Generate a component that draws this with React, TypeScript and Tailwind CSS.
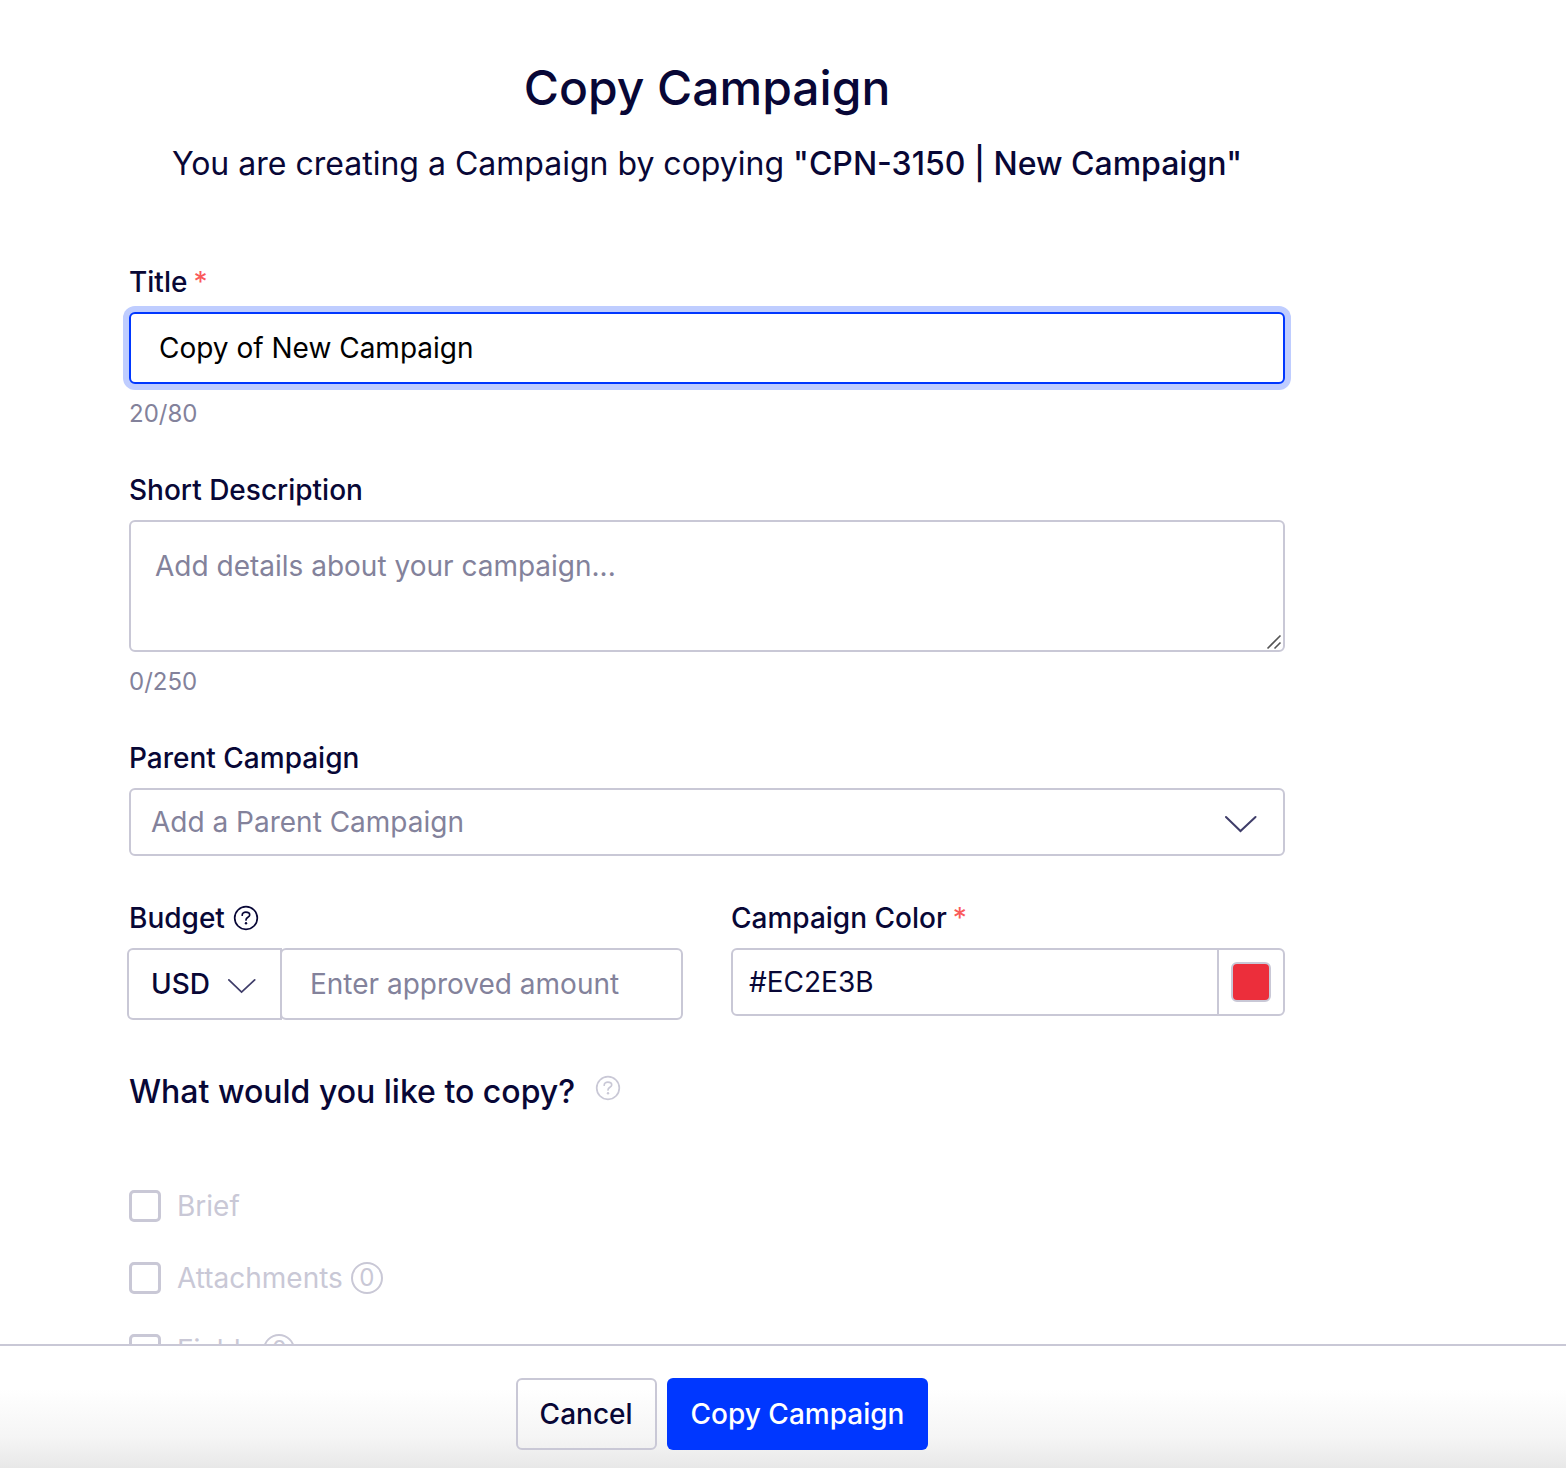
import { useState } from 'react';
import type { ReactNode } from 'react';

function Chevron({ className }: { className: string }) {
  return (
    <svg viewBox="0 0 32 18" fill="none" stroke="currentColor" strokeWidth="2" className={className} aria-hidden="true">
      <path d="M1 2 15.5 16 30.5 2" strokeLinecap="round" strokeLinejoin="miter" />
    </svg>
  );
}

function HelpIcon({ className }: { className: string }) {
  return (
    <svg viewBox="0 0 26 26" fill="none" stroke="currentColor" className={className} aria-hidden="true">
      <circle cx="13" cy="13" r="11.3" strokeWidth="1.7" />
      <path d="M9.2 10.2c0-2 1.6-3 3.7-3s3.8 1.1 3.8 2.8c0 2.4-3.7 2.2-3.7 4.9" strokeWidth="1.7" strokeLinecap="round" />
      <circle cx="13" cy="18.2" r="1.2" fill="currentColor" stroke="none" />
    </svg>
  );
}

function Label({ htmlFor, required, children }: { htmlFor: string; required?: boolean; children: ReactNode }) {
  return (
    <label htmlFor={htmlFor} className="block text-[28px] leading-10 font-medium">
      {children}
      {required && <span className="ml-1.5 font-normal text-[#fa5a5a]">*</span>}
    </label>
  );
}

function CopyOption({ id, label, count }: { id: string; label: string; count?: number }) {
  return (
    <li className="flex items-center gap-4">
      <input
        id={id}
        type="checkbox"
        disabled
        className="size-8 shrink-0 appearance-none rounded-[5px] border-3 border-[#c9c8d6] bg-white"
      />
      <label htmlFor={id} className="flex items-center gap-2 text-[28px] leading-10">
        {label}
        {count !== undefined && (
          <span className="flex size-8 items-center justify-center rounded-full border-2 border-[#c9c8d6] text-2xl leading-none">
            {count}
          </span>
        )}
      </label>
    </li>
  );
}

export default function App() {
  const [title, setTitle] = useState('Copy of New Campaign');
  const [description, setDescription] = useState('');
  const [color, setColor] = useState('#EC2E3B');

  return (
    <form
      className="flex h-screen flex-col bg-white font-['Inter',sans-serif] text-[#080736] [font-optical-sizing:none]"
      onSubmit={(event) => event.preventDefault()}
    >
      <main className="min-h-0 flex-1 overflow-y-auto pt-[58px] pr-[281px] pl-[129px] [scrollbar-width:none]">
        <header className="text-center">
          <h1 className="text-5xl leading-[60px] font-medium">Copy Campaign</h1>
          <p className="mt-6 text-[32px] leading-[44px] whitespace-nowrap">
            You are creating a Campaign by copying <strong className="font-medium">"CPN-3150 | New Campaign"</strong>
          </p>
        </header>

        <div className="mt-[76px]">
          <Label htmlFor="title" required>Title</Label>
          <input
            id="title"
            type="text"
            maxLength={80}
            value={title}
            onChange={(event) => setTitle(event.target.value)}
            className="mt-[10px] block h-[72px] w-full rounded-md border-2 border-[#0037ff] bg-white px-7 text-[28px] text-black ring-6 ring-[#bfcdff] outline-none"
          />
          <p className="mt-3 text-2xl leading-9 text-[#83829b]">{title.length}/80</p>
        </div>

        <div className="mt-[38px]">
          <Label htmlFor="description">Short Description</Label>
          <div className="relative mt-[10px]">
            <textarea
              id="description"
              maxLength={250}
              value={description}
              onChange={(event) => setDescription(event.target.value)}
              placeholder="Add details about your campaign..."
              className="block h-[132px] w-full resize-none rounded-md border-2 border-[#c9c8d6] bg-white px-6 py-6 text-[28px] leading-10 outline-none placeholder:text-[#83829b]"
            />
            <svg viewBox="0 0 16 16" fill="none" stroke="#555" strokeWidth="1.6" className="pointer-events-none absolute right-[3px] bottom-[2px] size-4" aria-hidden="true">
              <path d="M1.5 14.5 14.5 1.5M8.5 14.5 14.5 8.5" />
            </svg>
          </div>
          <p className="mt-3 text-2xl leading-9 text-[#83829b]">{description.length}/250</p>
        </div>

        <div className="mt-[38px]">
          <Label htmlFor="parent">Parent Campaign</Label>
          <div className="relative mt-[10px]">
            <select
              id="parent"
              className="block h-[68px] w-full appearance-none rounded-md border-2 border-[#c9c8d6] bg-white px-5 text-[28px] text-[#83829b] outline-none"
            >
              <option>Add a Parent Campaign</option>
            </select>
            <Chevron className="pointer-events-none absolute top-[27px] right-7 h-[18px] w-8 text-[#3f3d69]" />
          </div>
        </div>

        <div className="mt-[42px] grid grid-cols-2 items-start gap-12">
          <div>
            <div className="flex items-center gap-2">
              <Label htmlFor="budget">Budget</Label>
              <HelpIcon className="size-[26px]" />
            </div>
            <div className="mt-[10px] -ml-0.5 flex">
              <div className="relative shrink-0">
                <select
                  aria-label="Currency"
                  className="h-[72px] w-[155px] appearance-none rounded-l-md border-2 border-[#c9c8d6] bg-white px-[22px] text-[28px] font-medium outline-none"
                >
                  <option>USD</option>
                </select>
                <Chevron className="pointer-events-none absolute top-[30px] right-[26px] h-4 w-7 text-[#3f3d69]" />
              </div>
              <input
                id="budget"
                type="text"
                placeholder="Enter approved amount"
                className="relative -ml-0.5 h-[72px] min-w-0 flex-1 rounded-md border-2 border-[#c9c8d6] bg-white px-7 text-[28px] outline-none placeholder:text-[#83829b]"
              />
            </div>
          </div>
          <div>
            <Label htmlFor="color" required>Campaign Color</Label>
            <div className="mt-[10px] flex h-[68px] rounded-md border-2 border-[#c9c8d6]">
              <input
                id="color"
                type="text"
                value={color}
                onChange={(event) => setColor(event.target.value)}
                className="min-w-0 flex-1 rounded-l-md bg-white px-4 text-[28px] outline-none"
              />
              <div className="flex w-[66px] shrink-0 items-center justify-center border-l-2 border-[#c9c8d6]">
                <button
                  type="button"
                  aria-label="Pick a color"
                  className="size-10 rounded-md border-2 border-[#c9c8d6]"
                  style={{ backgroundColor: color }}
                />
              </div>
            </div>
          </div>
        </div>

        <section className="mt-12">
          <div className="flex items-start gap-5">
            <h2 className="text-[32px] leading-12 font-medium">What would you like to copy?</h2>
            <HelpIcon className="mt-[7px] size-[26px] text-[#c9c8d6]" />
          </div>
          <ul className="mt-[70px] flex flex-col gap-8 text-[#c9c8d6]">
            <CopyOption id="brief" label="Brief" />
            <CopyOption id="attachments" label="Attachments" count={0} />
            <CopyOption id="fields" label="Fields" count={0} />
          </ul>
        </section>
      </main>

      <footer className="flex shrink-0 justify-center gap-[10px] border-t-2 border-[#c9c8d6] bg-linear-to-b from-white from-35% via-[#f5f5f5] via-75% to-[#e8e8e8] pt-8 pr-[122px] pb-[18px]">
        <button type="button" className="h-[72px] rounded-md border-2 border-[#c9c8d6] px-[22px] text-[28px] font-medium">
          Cancel
        </button>
        <button type="submit" className="h-[72px] rounded-md bg-[#0037ff] px-6 text-[28px] font-medium text-white">
          Copy Campaign
        </button>
      </footer>
    </form>
  );
}
